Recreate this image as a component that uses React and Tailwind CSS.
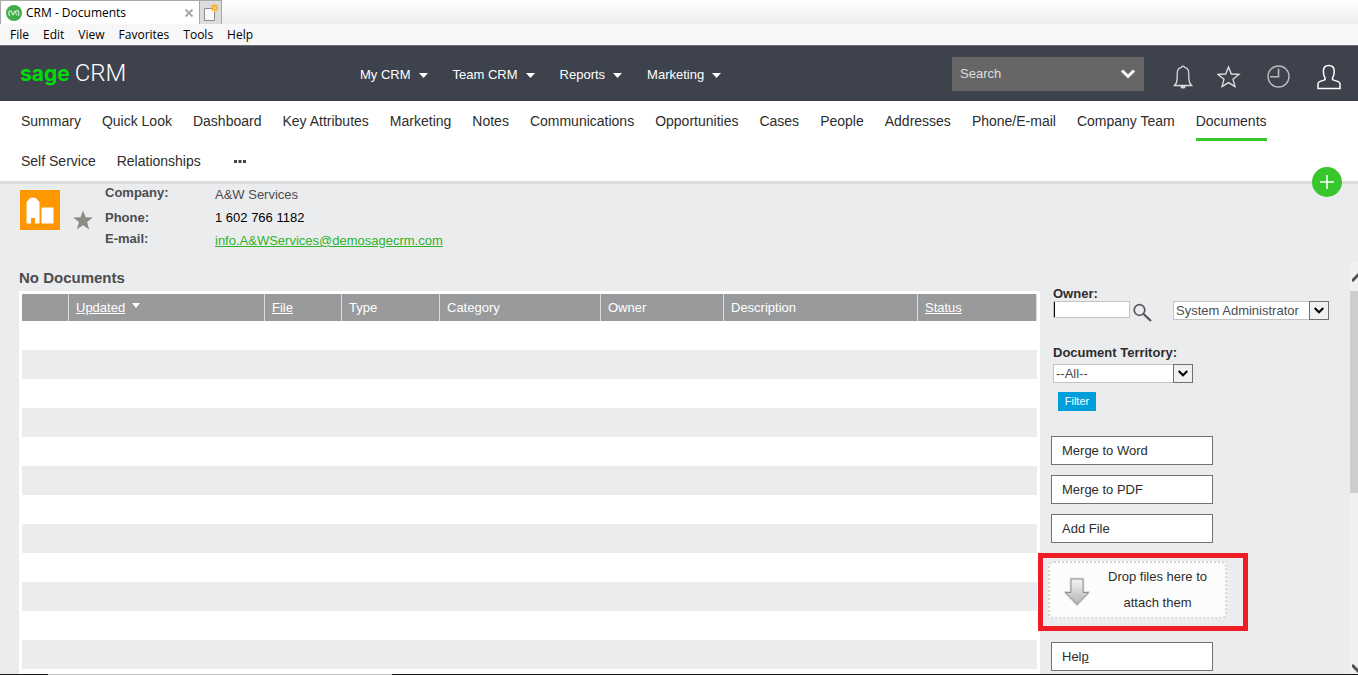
import React from 'react';

const browserMenus = ['File', 'Edit', 'View', 'Favorites', 'Tools', 'Help'];

const mainMenus = ['My CRM', 'Team CRM', 'Reports', 'Marketing'];

const tabs = [
  'Summary', 'Quick Look', 'Dashboard', 'Key Attributes', 'Marketing', 'Notes', 'Communications',
  'Opportunities', 'Cases', 'People', 'Addresses', 'Phone/E-mail', 'Company Team', 'Documents',
  'Self Service', 'Relationships',
];

const columns = [
  { label: '', width: 'w-[47px]' },
  { label: 'Updated', width: 'w-[196px]', sortable: true, sorted: true },
  { label: 'File', width: 'w-[77px]', sortable: true },
  { label: 'Type', width: 'w-[98px]' },
  { label: 'Category', width: 'w-[161px]' },
  { label: 'Owner', width: 'w-[123px]' },
  { label: 'Description', width: 'w-[194px]' },
  { label: 'Status', width: 'w-[119px]', sortable: true },
];

const emptyRows = Array.from({ length: 12 });

const BrowserChrome = () => (
  <div className="font-['Open_Sans',sans-serif] text-xs text-black">
    <div className="flex h-6 bg-linear-to-b from-white to-[#ececec]">
      <div className="flex w-[200px] items-center border border-b-0 border-[#a8a8a8] bg-white pl-[5px] pr-[5px]">
        <svg width="16" height="16" viewBox="0 0 16 16">
          <circle cx="8" cy="8" r="8" fill="#3fae49" />
          <path d="M3.500 10.500C2 8 3 5.500 4.800 6c1.500.5 1.200 4 2.200 4S8 6 9 6s.8 4 1.800 4M10.500 5.800c2-.5 3.200 2 2 4.700" fill="none" stroke="#d5f0d6" strokeWidth="1.200" strokeLinecap="round" />
        </svg>
        <span className="ml-1 flex-1">CRM - Documents</span>
        <button type="button" aria-label="Close tab">
          <svg width="10" height="10" viewBox="0 0 10 10" stroke="#a9a9a9" strokeWidth="2">
            <path d="M1.500 1.500l7 7M8.500 1.500l-7 7" />
          </svg>
        </button>
      </div>
      <button type="button" aria-label="New tab" className="flex w-[22px] items-center justify-center border border-b-0 border-l-0 border-[#a8a8a8] bg-[#dcdcdc]">
        <svg width="16" height="18" viewBox="0 0 16 18">
          <path d="M1.500 4.500h10v12h-10z" fill="#fafafa" stroke="#8b8b8b" />
          <path d="M11.500 0v8M7.500 4h8M8.700 1.200l5.600 5.600M14.300 1.200L8.700 6.800" stroke="#f0a01e" strokeWidth="1.200" />
          <circle cx="11.500" cy="4" r="1.500" fill="#ffd76a" />
        </svg>
      </button>
    </div>
    <div className="flex h-[22px] items-center gap-[14px] border-b border-[#6d6f73] bg-[#f7f7f7] pl-[10px]">
      {browserMenus.map((menu) => (
        <button type="button" key={menu}>{menu}</button>
      ))}
    </div>
  </div>
);

const Header = () => (
  <header className="flex h-[55px] items-center bg-[#3d424d] text-[13px] text-white">
    <a href="#" className="ml-5 flex w-[340px] items-baseline gap-[5px]">
      <span className="font-[Inter,sans-serif] text-[21px] leading-7 font-bold text-[#00dc06]">sage</span>
      <span className="font-[Roboto,sans-serif] text-[24px] leading-7 font-light">CRM</span>
    </a>
    <nav className="flex flex-1 gap-[25px] pt-[3px]">
      {mainMenus.map((menu) => (
        <button type="button" key={menu} className="flex items-center gap-2">
          {menu}
          <svg width="9" height="5" viewBox="0 0 9 5" fill="white"><path d="M0 0h9L4.500 5z" /></svg>
        </button>
      ))}
    </nav>
    <div className="mr-[29px] flex h-[34px] w-[192px] items-center bg-[#666] px-2">
      <input type="text" aria-label="Search" placeholder="Search" className="min-w-0 flex-1 placeholder:text-[#dedede] focus:outline-none" />
      <button type="button" aria-label="Search options">
        <svg width="16" height="10" viewBox="0 0 16 10" fill="none" stroke="white" strokeWidth="3">
          <path d="M2 1.500l6 6 6-6" />
        </svg>
      </button>
    </div>
    <div className="mr-4 flex items-center pt-[6px]">
      <button type="button" aria-label="Notifications" className="mr-6">
        <svg width="20" height="24" viewBox="0 0 20 24" fill="none" stroke="#d8d9db" strokeWidth="1.300">
          <path d="M1.500 20.500c2-2 2.700-3.500 2.700-7.500V8.500C4.200 5 6 2.700 8.500 2.300c.2-1.600 2.800-1.600 3 0 2.500.4 4.300 2.700 4.300 6.200V13c0 4 .7 5.500 2.700 7.500z" />
          <path d="M8 21c0 2.600 4 2.600 4 0z" fill="#d8d9db" />
        </svg>
      </button>
      <button type="button" aria-label="Favorites" className="mr-[26px]">
        <svg width="24" height="24" viewBox="0 0 24 24" fill="none" stroke="#e3e4e6" strokeWidth="1.300">
          <path d="M11.500 2l2.800 7 7.700.4-6 4.900 2 7.200-6.500-3.900L5 21.500l2-7.200-6-4.900L8.700 9z" />
        </svg>
      </button>
      <button type="button" aria-label="Recent" className="mr-[26px]">
        <svg width="24" height="24" viewBox="0 0 24 24" fill="none" stroke="#b9bbbf">
          <circle cx="11.500" cy="11.500" r="10.500" strokeWidth="1.400" />
          <path d="M11.500 3.500v8.300H3" strokeWidth="1.600" />
        </svg>
      </button>
      <button type="button" aria-label="Profile">
        <svg width="25" height="26" viewBox="0 0 25 26" fill="none" stroke="white" strokeWidth="1.500">
          <path d="M1 24.500V20c0-1.300.5-2 1.600-2.400l4.400-1.500c1.300-.5 1.500-1.600.8-2.600C6.700 12 6.400 9.500 6.400 7c0-3.500 2.200-5.500 5.400-5.500S17.200 3.500 17.200 7c0 2.500-.3 5-1.400 6.500-.7 1-.5 2.100.8 2.600l4.800 1.500c1.100.4 1.600 1.100 1.600 2.400v4.500z" />
        </svg>
      </button>
    </div>
  </header>
);

const TabBar = () => (
  <div className="relative border-b-[3px] border-[#dbdddc] bg-white pr-[60px] pl-[21px]">
    <nav className="flex flex-wrap gap-x-[21px] text-sm leading-5 text-[#2d2d2d]">
      {tabs.map((tab) => (
        <div key={tab} className="h-10 pt-[10px]">
          <a
            href="#"
            className={tab === 'Documents' ? 'block h-[30px] border-b-3 border-[#37c62b]' : 'block h-[30px]'}
          >
            {tab}
          </a>
        </div>
      ))}
      <button type="button" aria-label="More tabs" className="ml-3 h-10">
        <svg width="12" height="3" viewBox="0 0 12 3" fill="#444"><path d="M0 0h3v3H0zM4.500 0h3v3h-3zM9 0h3v3H9z" /></svg>
      </button>
    </nav>
    <button type="button" aria-label="New" className="absolute right-4 -bottom-4 flex size-[30px] items-center justify-center rounded-full bg-[#37c62b]">
      <svg width="14" height="14" viewBox="0 0 14 14" stroke="white" strokeWidth="1.500"><path d="M7 0v14M0 7h14" /></svg>
    </button>
  </div>
);

const CompanySummary = () => (
  <section className="flex h-[78px] pl-5 text-[13px]">
    <svg className="mt-[6px]" width="40" height="40" viewBox="0 0 40 40">
      <path d="M0 0h40v40H0z" fill="#ff9800" />
      <path d="M6.500 33.500V12l2-2c.5-1.500 2-2.500 4.500-2.500s4 1 4.500 2.500l2 2v21.500H15V28h-4v5.500zM21.500 17.500h12v16h-12z" fill="white" />
    </svg>
    <svg className="mt-[26px] ml-[13px]" width="20" height="20" viewBox="0 0 20 20">
      <path d="M10 .5l2.500 6.800 7.300.3-5.700 4.500 2 7.200L10 15.200l-6.100 4.100 2-7.200L.2 7.600l7.300-.3z" fill="#8c8a84" />
    </svg>
    <dl className="mt-px ml-3 grid grid-cols-[110px_auto] grid-rows-[20px_26px_20px] content-start text-[#4b4d4f]">
      <dt className="leading-4 font-bold">Company:</dt>
      <dd className="leading-5">A&amp;W Services</dd>
      <dt className="leading-[26px] font-bold">Phone:</dt>
      <dd className="leading-[26px] text-black">1 602 766 1182</dd>
      <dt className="leading-4 font-bold">E-mail:</dt>
      <dd className="leading-5">
        <a href="mailto:info.A&WServices@demosagecrm.com" className="text-[#2fb32a] underline">info.A&amp;WServices@demosagecrm.com</a>
      </dd>
    </dl>
  </section>
);

const DocumentsTable = () => (
  <section className="min-w-0 flex-1 pl-[19px]">
    <h1 className="h-[29px] pt-[6px] text-[15px] leading-5 font-bold text-[#4b4d4f]">No Documents</h1>
    <div className="bg-white px-[3px] pt-[3px] pb-[5px]">
      <table className="w-full table-fixed border-separate border-spacing-0 text-[13px]">
        <thead>
          <tr className="h-[27px] bg-[#999a9c] text-left text-white">
            {columns.map((col) => (
              <th key={col.label} className={`border-r border-[#dcdcdc] p-0 pl-[7px] font-normal ${col.width}`}>
                {col.sortable ? <a href="#" className="underline">{col.label}</a> : col.label}
                {col.sorted && (
                  <svg className="mb-[5px] ml-[7px] inline-block" width="8" height="5" viewBox="0 0 8 5" fill="white">
                    <path d="M0 0h8L4 5z" />
                  </svg>
                )}
              </th>
            ))}
          </tr>
        </thead>
        <tbody>
          {emptyRows.map((_, idx) => (
            <tr key={idx} className="h-[29px] even:bg-[#ebecee]">
              <td colSpan={columns.length} className="p-0"></td>
            </tr>
          ))}
        </tbody>
      </table>
    </div>
  </section>
);

const SelectBox = ({ id, label, value, className }) => (
  <div className={`relative h-[19px] ${className}`}>
    <select id={id} aria-label={label} className="block h-[19px] w-full appearance-none border border-[#c3c3c3] bg-white pl-[2px] text-[13px] leading-4 text-[#4b4d4f]">
      <option>{value}</option>
    </select>
    <span className="pointer-events-none absolute top-0 right-0 flex h-[19px] w-5 items-center justify-center border border-[#707070] bg-[#f0f0f0]">
      <svg width="10" height="7" viewBox="0 0 10 7" fill="none" stroke="black" strokeWidth="2"><path d="M.7 1L5 5.300 9.300 1" /></svg>
    </span>
  </div>
);

const ActionButton = ({ children }) => (
  <button type="button" className="block h-[29px] w-[162px] border border-[#72736d] bg-white pl-[10px] text-left text-[13px] text-[#2d2d2d]">
    {children}
  </button>
);

const DropZone = () => (
  <div className="relative mt-[18px] -ml-[3px] flex h-[58px] w-[179px] items-center rounded-md border-2 border-dotted border-[#d4d4d4] bg-[#fcfcfc]">
    <svg className="mt-[3px] ml-[14px]" width="26" height="30" viewBox="0 0 26 30">
      <defs>
        <linearGradient id="arrow" x1="0" y1="0" x2="0" y2="1">
          <stop offset="0" stopColor="#f4f4f4" />
          <stop offset="1" stopColor="#b4b4b4" />
        </linearGradient>
      </defs>
      <path d="M7 2h12v13.500h5.500L13 27.500 1.500 15.500H7z" fill="url(#arrow)" stroke="#ddd" strokeWidth="3" />
      <path d="M7 2h12v13.500h5.500L13 27.500 1.500 15.500H7z" fill="url(#arrow)" stroke="#8f8f8f" />
    </svg>
    <p className="flex-1 px-3 text-center text-[13px] leading-[26px] text-[#2d2d2d]">Drop files here to attach them</p>
    {/* Highlight frame */}
    <div className="pointer-events-none absolute -top-[10px] -right-[23px] -bottom-[14px] -left-3 border-5 border-[#ee1c25]"></div>
  </div>
);

const Sidebar = () => (
  <aside className="w-[310px] pt-6 pl-[11px] text-[13px] text-[#2d2d2d]">
    <div className="pl-[2px]">
      <label htmlFor="owner" className="block h-[15px] leading-[15px] font-bold">Owner:</label>
      <div className="flex items-start">
        <div className="relative">
          <input id="owner" type="text" className="block h-[17px] w-[77px] border border-[#c3c3c3] bg-white px-1" />
          <span className="absolute top-[1px] left-[1px] h-[15px] w-px bg-black"></span>
        </div>
        <button type="button" aria-label="Find owner" className="mt-[2px] ml-[3px]">
          <svg width="19" height="19" viewBox="0 0 19 19" fill="none" stroke="#55575a">
            <circle cx="6.500" cy="7" r="5.300" strokeWidth="1.700" />
            <path d="M10.500 11l7.500 7" strokeWidth="2.300" />
          </svg>
        </button>
        <SelectBox id="user" label="User" value="System Administrator" className="ml-[21px] w-[156px]" />
      </div>
      <label htmlFor="territory" className="mt-[23px] block h-[19px] leading-4 font-bold">Document Territory:</label>
      <SelectBox id="territory" label="Document Territory" value="--All--" className="w-[140px]" />
      <button type="button" className="mt-[9px] ml-[5px] block h-[19px] w-[38px] bg-[#009fdb] text-[11px] text-white">Filter</button>
    </div>
    <div className="mt-[25px] flex flex-col gap-[10px]">
      <ActionButton>Merge to Word</ActionButton>
      <ActionButton>Merge to PDF</ActionButton>
      <ActionButton>Add File</ActionButton>
    </div>
    <DropZone />
    <div className="mt-[23px]">
      <ActionButton>Hel<span className="underline">p</span></ActionButton>
    </div>
  </aside>
);

const ScrollBar = () => (
  <div className="flex w-2 flex-col overflow-hidden bg-[#f0f0f0]">
    <svg className="mt-[10px] ml-[2px] shrink-0" width="14" height="10" viewBox="0 0 14 10" fill="none" stroke="#505050" strokeWidth="3"><path d="M0 9l7-7 7 7" /></svg>
    <div className="mt-[9px] h-[202px] bg-[#cdcdcd]"></div>
    <svg className="mt-auto ml-[2px] shrink-0" width="14" height="10" viewBox="0 0 14 10" fill="none" stroke="#505050" strokeWidth="3"><path d="M0 1l7 7 7-7" /></svg>
  </div>
);

const App = () => (
  <div className="bg-[#ebecee] font-['Liberation_Sans',Arial,sans-serif]">
    <BrowserChrome />
    <Header />
    <TabBar />
    <CompanySummary />
    <main className="flex">
      <DocumentsTable />
      <Sidebar />
      <ScrollBar />
    </main>
    <div className="h-px bg-[#1c1c1c] pl-12">
      <div className="h-px w-[344px] bg-[#bdbdbd]"></div>
    </div>
  </div>
);

export default App;
